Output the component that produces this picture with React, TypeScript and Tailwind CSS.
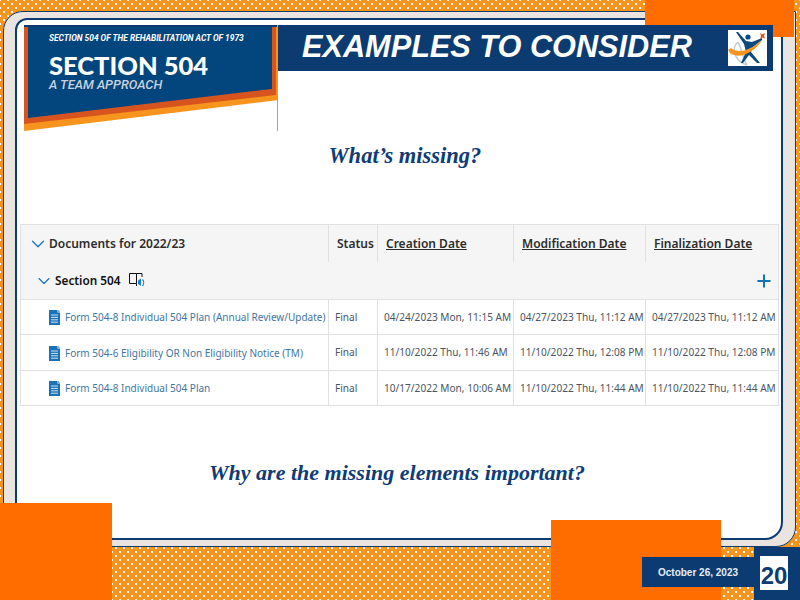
import { ChevronDown, Plus } from "lucide-react";

const docs = [
  {
    name: "Form 504-8 Individual 504 Plan (Annual Review/Update)",
    created: "04/24/2023 Mon, 11:15 AM",
    modified: "04/27/2023 Thu, 11:12 AM",
    finalized: "04/27/2023 Thu, 11:12 AM",
    rowClass: "h-[35px] border-b border-[#e0e0e0]",
  },
  {
    name: "Form 504-6 Eligibility OR Non Eligibility Notice (TM)",
    created: "11/10/2022 Thu, 11:46 AM",
    modified: "11/10/2022 Thu, 12:08 PM",
    finalized: "11/10/2022 Thu, 12:08 PM",
    rowClass: "h-[36px] border-b border-[#e0e0e0]",
  },
  {
    name: "Form 504-8 Individual 504 Plan",
    created: "10/17/2022 Mon, 10:06 AM",
    modified: "11/10/2022 Thu, 11:44 AM",
    finalized: "11/10/2022 Thu, 11:44 AM",
    rowClass: "h-[34px]",
  },
];

const DocIcon = () => (
  <svg width="11" height="15" viewBox="0 0 11 15" className="shrink-0">
    <path d="M0 0H8.5V2.5H11V15H0Z" fill="#1a73b8" />
    <path d="M9.2 0L11 1.8H9.2Z" fill="#1a73b8" />
    <path d="M2 5H9M2 7.4H9M2 9.8H9M2 12.2H9" stroke="#cfe3f2" strokeWidth="1" />
  </svg>
);

const BookIcon = () => (
  <svg width="17" height="15" viewBox="0 0 17 15" className="shrink-0">
    <path d="M0.5 0.5H7.5V10.5H0.5ZM7.5 0.5H13V4M7.5 10.5V13" fill="none" stroke="#111" strokeWidth="1" />
    <path d="M9 7.5L12 5.5V13L9 11Z" fill="#1a7fd0" />
    <path d="M13.5 6.5C15 8 15 11 13.5 13" fill="none" stroke="#1a7fd0" strokeWidth="1.2" />
  </svg>
);

const Logo = () => (
  <svg width="39" height="36" viewBox="0 0 39 36">
    <path d="M10 12C3 18 6 31 19 35M10 12C14 20 15 29 19 35M4 24C10 21 15 22 19 26" fill="none" stroke="#c3cbd6" strokeWidth="1.6" />
    <path d="M8 2L10 2L18 11L24 12L34 8L34 10L25 17L23 22L32 33L29 33L21 25L15 33L13 33L18 22L16 14Z" fill="#0a4a82" />
    <circle cx="20" cy="7" r="2.6" fill="#0a4a82" />
    <path d="M0 20L3 18C8 23 20 23 35 9C25 25 9 29 3 23L4 26Z" fill="#f7941d" />
    <path d="M32 3L34 4.5L37 3L36 6L37 8.5L34 7.5L32 9L33 6Z" fill="#d8541e" />
  </svg>
);

const HeadCell = ({ label, link }: { label: string; link?: boolean }) => (
  <div className="flex h-[37px] items-center border-l border-[#e0e0e0] pl-[8px] text-[12px] font-semibold text-[#2d2d2d]">
    <span className={link ? "underline" : ""}>{label}</span>
  </div>
);

const Cell = ({ text }: { text: string }) => (
  <div className="flex items-center whitespace-nowrap border-l border-[#e0e0e0] pl-[6px] pt-[1px] text-[10.1px] text-[#4b5563]">
    {text}
  </div>
);

export default function App() {
  return (
    <div className="relative h-[600px] w-[800px] overflow-hidden bg-[#f7941d] bg-[radial-gradient(circle,#fff_1px,transparent_1.2px),radial-gradient(circle,#fff_1px,transparent_1.2px)] bg-[length:8px_8px] bg-[position:0_0,4px_4px] pb-[53px] pl-[3px] pr-[4px] pt-[11px] font-['Noto_Sans',sans-serif]">
      {/* slide frame */}
      <div className="h-full rounded-br-[20px] rounded-tl-[20px] border border-[#0b3b70] bg-[#e9e4df] pb-[6px] pl-[11px] pr-[12px] pt-[6px]">
        <div className="h-full rounded-br-[18px] rounded-tl-[12px] border-2 border-[#0b3b70] bg-white pl-[7px] pt-[5px]">
          {/* header */}
          <div className="relative z-10 flex items-start">
            <div className="h-[106px] w-[254px] shrink-0 border-r border-[#f7941d]">
              <div className="h-[2px] bg-[#0b3b70]" />
              <div className="h-[104px] bg-[#f7941d] [clip-path:polygon(0_0,100%_0,100%_70.5%,0_100%)]">
                <div className="mr-[1px] h-[97px] bg-[#d8541e] [clip-path:polygon(0_0,100%_0,100%_70%,0_100%)]">
                  <div className="mx-[4px] h-[91px] bg-[#03457d] pl-[21px] pt-[6px] text-white [clip-path:polygon(0_0,100%_0,100%_68%,0_100%)]">
                    <div className="font-['Roboto',sans-serif] text-[8.4px] font-bold italic leading-[10px] whitespace-nowrap">
                      SECTION 504 OF THE REHABILITATION ACT OF 1973
                    </div>
                    <div className="mt-[11px] font-['Lato',sans-serif] text-[25.5px] font-black leading-[22px] whitespace-nowrap">
                      SECTION 504
                    </div>
                    <div className="mt-[2px] font-['Roboto',sans-serif] text-[12.8px] font-medium italic leading-[14px] text-[#c9d1dc] whitespace-nowrap">
                      A TEAM APPROACH
                    </div>
                  </div>
                </div>
              </div>
            </div>
            <div className="flex h-[46px] w-[495px] items-center justify-between bg-[#0b3b70] pl-[24px] pr-[6px]">
              <span className="pb-[2px] font-['Liberation_Sans',sans-serif] text-[30.7px] font-bold italic leading-[36px] text-white whitespace-nowrap">
                EXAMPLES TO CONSIDER
              </span>
              <div className="flex h-[36px] w-[39px] items-center justify-center bg-white">
                <Logo />
              </div>
            </div>
          </div>

          <h2 className="mt-[11px] w-[762px] text-center font-['Liberation_Serif',serif] text-[22.5px] font-bold italic leading-[28px] text-[#0f3c78]">
            What’s missing?
          </h2>

          {/* documents table */}
          <div className="ml-[-4px] mt-[54px] w-[759px] border border-[#e0e0e0] bg-white">
            <div className="grid grid-cols-[307px_49px_136px_132px_1fr] bg-[#f5f5f5]">
              <div className="flex h-[37px] items-center pl-[6px] text-[12px] font-semibold text-[#2d2d2d]">
                <ChevronDown size={22} strokeWidth={1.4} className="text-[#1a73b8]" />
                Documents for 2022/23
              </div>
              <HeadCell label="Status" />
              <HeadCell label="Creation Date" link />
              <HeadCell label="Modification Date" link />
              <HeadCell label="Finalization Date" link />
            </div>
            <div className="flex h-[38px] items-center border-b border-[#e0e0e0] bg-[#f5f5f5] pl-[13px] pr-[4px] text-[11.8px] font-semibold text-[#111]">
              <ChevronDown size={20} strokeWidth={1.4} className="mr-[1px] text-[#1a73b8]" />
              Section 504
              <span className="ml-[8px]">
                <BookIcon />
              </span>
              <Plus size={20} strokeWidth={2.4} className="ml-auto text-[#1373b5]" />
            </div>
            {docs.map((d) => (
              <div
                key={d.name}
                className={`grid grid-cols-[307px_49px_136px_132px_1fr] ${d.rowClass}`}
              >
                <div className="flex items-center whitespace-nowrap pl-[28px] pt-[1px] text-[10px] text-[#3f76a3]">
                  <DocIcon />
                  <span className="ml-[5px]">{d.name}</span>
                </div>
                <Cell text="Final" />
                <Cell text={d.created} />
                <Cell text={d.modified} />
                <Cell text={d.finalized} />
              </div>
            ))}
          </div>

          <h2 className="mt-[53px] w-[746px] text-center font-['Liberation_Serif',serif] text-[22px] font-bold italic leading-[28px] text-[#0f3c78]">
            Why are the missing elements important?
          </h2>
        </div>
      </div>

      {/* orange corner blocks and footer sit over the frame */}
      <div className="absolute left-[645px] top-0 h-[37px] w-[149px] bg-[#ff6d00]" />
      <div className="absolute bottom-0 left-0 h-[97px] w-[112px] bg-[#ff6d00]" />
      <div className="absolute bottom-0 left-[551px] top-[520px] w-[170px] bg-[#ff6d00]" />
      <div className="absolute left-[642px] top-[557px] flex h-[30px] w-[112px] items-center justify-center bg-[#0b3b70] font-['Liberation_Sans',sans-serif] text-[10px] font-bold text-[#e6eef6]">
        October 26, 2023
      </div>
      <div className="absolute bottom-0 left-[754px] top-[547px] w-[46px] bg-[#0b3b70] pl-[6px] pt-[9px]">
        <div className="flex h-[34px] w-[28px] items-center justify-center bg-white pt-[5px] font-['Liberation_Sans',sans-serif] text-[24px] font-bold text-[#0b3b70]">
          20
        </div>
      </div>
    </div>
  );
}
